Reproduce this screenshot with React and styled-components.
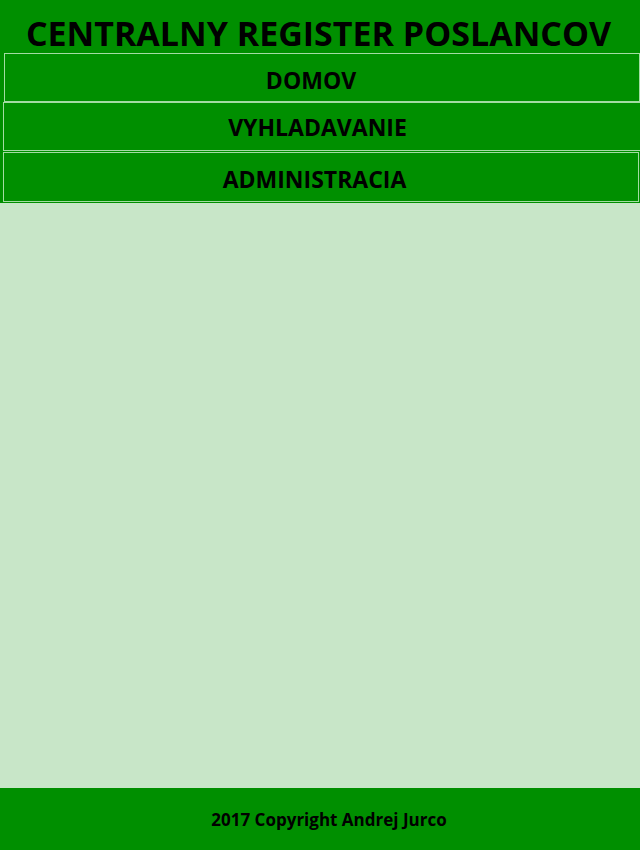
import React from "react";
import styled, { createGlobalStyle } from "styled-components";

const Global = createGlobalStyle`
  html, body { margin: 0; padding: 0; }
  body { font-family: "Open Sans", "DejaVu Sans", sans-serif; background: #c8e6c8; }
`;

const Page = styled.div`
  display: flex;
  flex-direction: column;
  min-height: 850px;
`;

const Header = styled.header`
  background: #008f00;
  padding-bottom: 1px;
`;

const Title = styled.h1`
  margin: 0;
  height: 53px;
  padding-top: 13px;
  box-sizing: border-box;
  text-align: center;
  font-size: 34px;
  font-weight: 700;
  line-height: 40px;
  color: #000;
  padding-right: 3px;
  white-space: nowrap;
`;

const Nav = styled.nav`
  display: flex;
  flex-direction: column;
`;

const NavItem = styled.a`
  display: block;
  box-sizing: border-box;
  height: ${(p) => p.$h}px;
  margin-left: ${(p) => p.$left}px;
  margin-right: ${(p) => p.$right}px;
  margin-top: ${(p) => p.$top}px;
  padding-top: ${(p) => p.$pt}px;
  padding-right: ${(p) => p.$shift}px;
  border: 1px solid #a3dca3;
  text-align: center;
  font-size: 23px;
  font-weight: 700;
  line-height: 30px;
  color: #000;
  text-decoration: none;
`;

const Main = styled.main`
  flex: 1;
  background: #c8e6c8;
`;

const Footer = styled.footer`
  height: 62px;
  background: #008f00;
  display: flex;
  align-items: center;
  justify-content: center;
  font-size: 17px;
  font-weight: 700;
  color: #000;
  padding-left: 18px;
  padding-top: 1px;
  box-sizing: border-box;
`;

export default function App() {
  return (
    <Page>
      <Global />
      <Header>
        <Title>CENTRALNY REGISTER POSLANCOV</Title>
        <Nav>
          <NavItem href="#" $h={49} $left={4} $right={0} $top={0} $pt={11} $shift={22}>
            DOMOV
          </NavItem>
          <NavItem href="#" $h={49} $left={3} $right={-2} $top={0} $pt={9} $shift={10}>
            VYHLADAVANIE
          </NavItem>
          <NavItem href="#" $h={50} $left={3} $right={1} $top={1} $pt={11} $shift={13}>
            ADMINISTRACIA
          </NavItem>
        </Nav>
      </Header>
      <Main />
      <Footer>2017 Copyright Andrej Jurco</Footer>
    </Page>
  );
}
